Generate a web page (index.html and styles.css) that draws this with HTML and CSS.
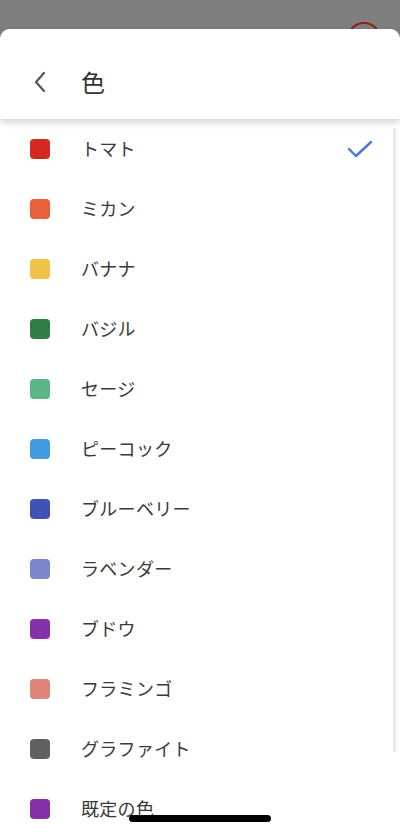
FILE: index.html
```html
<!DOCTYPE html>
<html lang="ja">
<head>
    <meta charset="UTF-8">
    <meta name="viewport" content="width=device-width, initial-scale=1.0">
    <title>色</title>
    <link rel="stylesheet" href="styles.css">
</head>
<body>
<div class="backdrop">
    <div class="avatar"></div>
</div>
<div class="sheet">
    <header class="sheet-header">
        <button class="back" aria-label="戻る">
            <svg width="14" height="22" viewBox="0 0 14 22"><path d="M11 2 L3 11 L11 20" fill="none" stroke="#555" stroke-width="2.2" stroke-linecap="round" stroke-linejoin="round"/></svg>
        </button>
        <h1>色</h1>
    </header>
    <ul class="colors">
        <li><span class="swatch tomato"></span><span class="name">トマト</span>
            <svg class="check" width="26" height="18" viewBox="0 0 26 18"><path d="M2 9 L9 16 L24 2" fill="none" stroke="#4a78d6" stroke-width="2.4" stroke-linecap="round" stroke-linejoin="round"/></svg>
        </li>
        <li><span class="swatch tangerine"></span><span class="name">ミカン</span></li>
        <li><span class="swatch banana"></span><span class="name">バナナ</span></li>
        <li><span class="swatch basil"></span><span class="name">バジル</span></li>
        <li><span class="swatch sage"></span><span class="name">セージ</span></li>
        <li><span class="swatch peacock"></span><span class="name">ピーコック</span></li>
        <li><span class="swatch blueberry"></span><span class="name">ブルーベリー</span></li>
        <li><span class="swatch lavender"></span><span class="name">ラベンダー</span></li>
        <li><span class="swatch grape"></span><span class="name">ブドウ</span></li>
        <li><span class="swatch flamingo"></span><span class="name">フラミンゴ</span></li>
        <li><span class="swatch graphite"></span><span class="name">グラファイト</span></li>
        <li><span class="swatch grape"></span><span class="name">既定の色</span></li>
    </ul>
    <div class="scrollbar"></div>
</div>
<div class="home-indicator"></div>
</body>
</html>
```

FILE: styles.css
```css
html, body {
    margin: 0;
    height: 100%;
    overflow: hidden;
}
body {
    background: #7f7f7f;
    font-family: "Noto Sans CJK JP", "Noto Sans", sans-serif;
    color: #3a3a3a;
    position: relative;
}
.backdrop {
    height: 29px;
    position: relative;
}
.avatar {
    position: absolute;
    left: 347px;
    top: 22px;
    width: 34px;
    height: 34px;
    border-radius: 50%;
    border: 2px solid #8a2020;
    box-sizing: border-box;
}
.sheet {
    position: relative;
    background: #fff;
    border-radius: 10px 10px 0 0;
    height: 803px;
}
.sheet-header {
    height: 90px;
    display: flex;
    align-items: center;
    padding-top: 16px;
    box-sizing: border-box;
    border-radius: 10px 10px 0 0;
    box-shadow: 0 3px 8px rgba(0, 0, 0, 0.2);
    position: relative;
    z-index: 1;
    background: #fff;
}
.back {
    width: 14px;
    height: 22px;
    padding: 0;
    margin: 0 0 0 33px;
    border: none;
    background: none;
    display: flex;
}
h1 {
    margin: 0 0 0 34px;
    font-size: 24px;
    font-weight: 400;
    color: #333;
    line-height: 1;
}
.colors {
    list-style: none;
    margin: 0;
    padding: 0;
}
.colors li {
    height: 60px;
    display: flex;
    align-items: center;
    padding-left: 30px;
}
.swatch {
    width: 20px;
    height: 20px;
    border-radius: 4px;
    flex-shrink: 0;
}
.name {
    margin-left: 31px;
    font-size: 18px;
    letter-spacing: 0.3px;
    margin-top: -2px;
}
.check {
    margin-left: auto;
    margin-right: 27px;
}
.tomato { background: #d22a1f; }
.tangerine { background: #e8613a; }
.banana { background: #f0c24a; }
.basil { background: #327c46; }
.sage { background: #5db486; }
.peacock { background: #429be0; }
.blueberry { background: #3f51b5; }
.lavender { background: #7d87c9; }
.grape { background: #8431a9; }
.flamingo { background: #de8479; }
.graphite { background: #616161; }
.scrollbar {
    position: absolute;
    right: 4px;
    top: 99px;
    width: 3px;
    height: 624px;
    background: #e9e9e9;
    border-radius: 2px;
}
.home-indicator {
    position: absolute;
    left: 129px;
    bottom: 10px;
    width: 142px;
    height: 7px;
    border-radius: 4px;
    background: #000;
}
```
